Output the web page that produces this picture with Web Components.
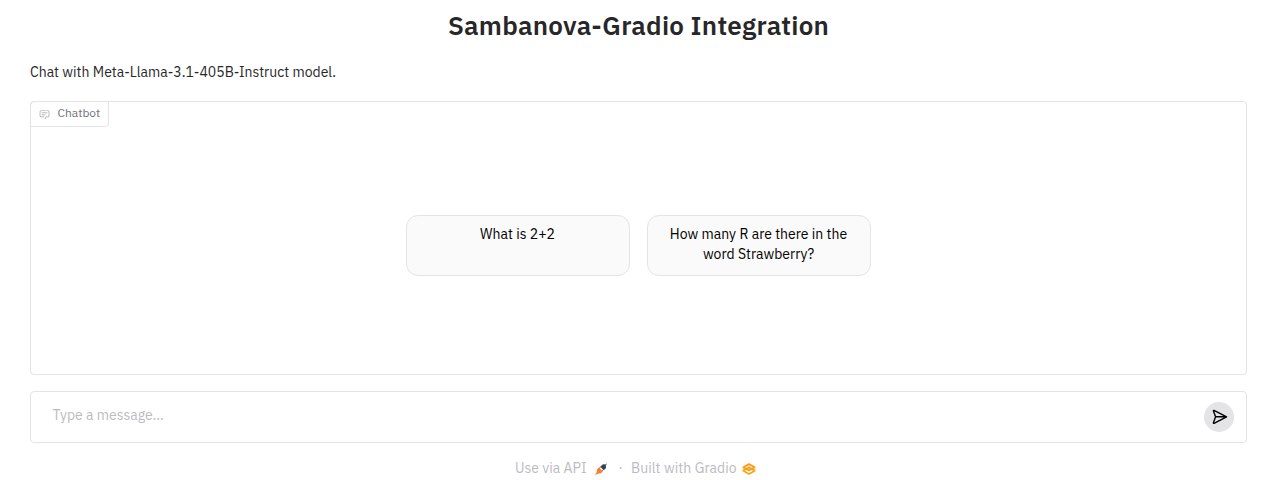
<!DOCTYPE html>
<html lang="en">
<head>
<meta charset="utf-8">
<title>Sambanova-Gradio Integration</title>
<style>
html,body{margin:0;height:480px;overflow:hidden;background:#fff}
body{font-family:"IBM Plex Sans","Noto Sans",sans-serif;color:#27272a}
</style>
</head>
<body>
<chat-app></chat-app>
<script>
function define(name, html) {
  const t = document.createElement('template');
  t.innerHTML = html;
  customElements.define(name, class extends HTMLElement {
    constructor() {
      super();
      this.attachShadow({mode: 'open'}).append(t.content.cloneNode(true));
    }
  });
}

define('page-heading', `<style>
:host{display:block;text-align:center;height:52px}
h1{margin:0;font-size:26px;line-height:51px;font-weight:600;letter-spacing:.25px;white-space:nowrap;color:#27272a}
</style><h1><slot></slot></h1>`);

define('page-description', `<style>
:host{display:block;height:21px;margin-top:10px;white-space:nowrap}
p{margin:0;font-size:14px;line-height:21px}
</style><p><slot></slot></p>`);

define('block-label', `<style>
:host{display:inline-flex;align-items:center;box-sizing:border-box;width:79px;height:26px;margin:-1px 0 0 -1px;padding:0 0 0 8px;
border:1px solid #e4e4e7;border-radius:4px 0 4px 0;font-size:12px;line-height:24px;color:#71717a;white-space:nowrap}
svg{width:11px;height:11px;margin-right:7.5px;flex:none;color:#a1a1aa}
span{margin-top:-2px}
</style><svg viewBox="0 0 32 32" fill="currentColor"><path d="M17.74 30 16 29l4-7h6a2 2 0 0 0 2-2V8a2 2 0 0 0-2-2H6a2 2 0 0 0-2 2v12a2 2 0 0 0 2 2h9v2H6a4 4 0 0 1-4-4V8a4 4 0 0 1 4-4h20a4 4 0 0 1 4 4v12a4 4 0 0 1-4 4h-4.84Z"/><path d="M8 10h16v2H8zM8 16h10v2H8z"/></svg><span><slot></slot></span>`);

define('example-card', `<style>
:host{display:block;box-sizing:border-box;width:224px;height:61px;padding:8px 17px 8px 16px;border:1px solid #e4e4e7;border-radius:12px;
background:#fafafa;color:#000;font-size:14px;line-height:20px;text-align:center;white-space:nowrap}
</style><slot></slot>`);

define('chat-panel', `<style>
:host{display:flex;flex-direction:column;box-sizing:border-box;height:274px;margin-top:18px;border:1px solid #e4e4e7;border-radius:4px}
block-label{align-self:flex-start}
.examples{display:flex;justify-content:center;gap:17px;margin-top:88px}
</style><block-label>Chatbot</block-label><div class="examples"><slot></slot></div>`);

define('send-button', `<style>
:host{display:flex;align-items:center;justify-content:center;box-sizing:border-box;width:30px;height:30px;padding-left:2px;border-radius:50%;background:#e4e4e7}
svg{width:16px;height:16px;display:block}
</style><svg viewBox="0 0 16 16" fill="none" stroke="#000" stroke-width="1.4" stroke-linejoin="round" stroke-linecap="round"><path d="M2 1.4 14.6 7.8 2 14.4Q1.4 14.5 1.4 13.7L3.6 7.8 1.4 2.1Q1.4 1.3 2 1.4ZM3.6 7.8H14"/></svg>`);

define('message-box', `<style>
:host{display:flex;align-items:center;justify-content:space-between;box-sizing:border-box;height:52px;margin-top:16px;padding:0 12px 0 21.5px;border:1px solid #e4e4e7;border-radius:4px}
span{font-size:14px;line-height:20px;margin-bottom:4px;color:#bbbbc2}
</style><span><slot></slot></span><send-button></send-button>`);

define('page-footer', `<style>
:host{display:flex;align-items:center;height:20px;margin:15px 0 0 485px;font-size:14px;line-height:20px;color:#bbbbc2;white-space:nowrap}
.api{width:79px}
.rocket{width:14px;height:14px;margin-top:2px}
.dot{width:23px;padding-left:2px;box-sizing:border-box;text-align:center}
.built{width:111px;letter-spacing:.06px}
.logo{width:14px;height:14px;margin-top:1px}
</style><span class="api">Use via API</span>
<svg class="rocket" viewBox="0 0 28 28"><path d="M26 2.5 22.5 4.8 18 4.5 12.5 9.5 19.5 16.5 24 12 23.7 7.5Z" fill="#374151"/><path d="M10 11 5.5 15.3 5.8 19.5 2.2 25.8 9.5 22.8 13.8 22.7 17.5 19Z" fill="#ff7c26"/><path d="m10.5 12.5 3-3M16 18l3-3" stroke="#444b59" stroke-width="1.5"/></svg>
<span class="dot">·</span><span class="built">Built with Gradio</span>
<svg class="logo" viewBox="0 0 28 28" fill="none" stroke-width="3" stroke-linejoin="round"><path d="M14 4 2.5 10.5l11.5 6.5 11.5-6.5Z" stroke="#f9981a" fill="#ffe5b0"/><path d="M2.5 17.5 14 24l11.5-6.5L14 11Z" stroke="#f9a01a"/><path d="M2.5 10.5v7M25.5 10.5v7" stroke="#ffbd30" stroke-width="2"/></svg>`);

define('chat-app', `<style>
:host{display:block;box-sizing:border-box;width:1280px;padding:0 33px 0 30px}
</style>
<page-heading>Sambanova-Gradio Integration</page-heading>
<page-description>Chat with Meta-Llama-3.1-405B-Instruct model.</page-description>
<chat-panel><example-card>What is 2+2</example-card><example-card>How many R are there in the<br>word Strawberry?</example-card></chat-panel>
<message-box>Type a message...</message-box>
<page-footer></page-footer>`);
</script>
</body>
</html>
